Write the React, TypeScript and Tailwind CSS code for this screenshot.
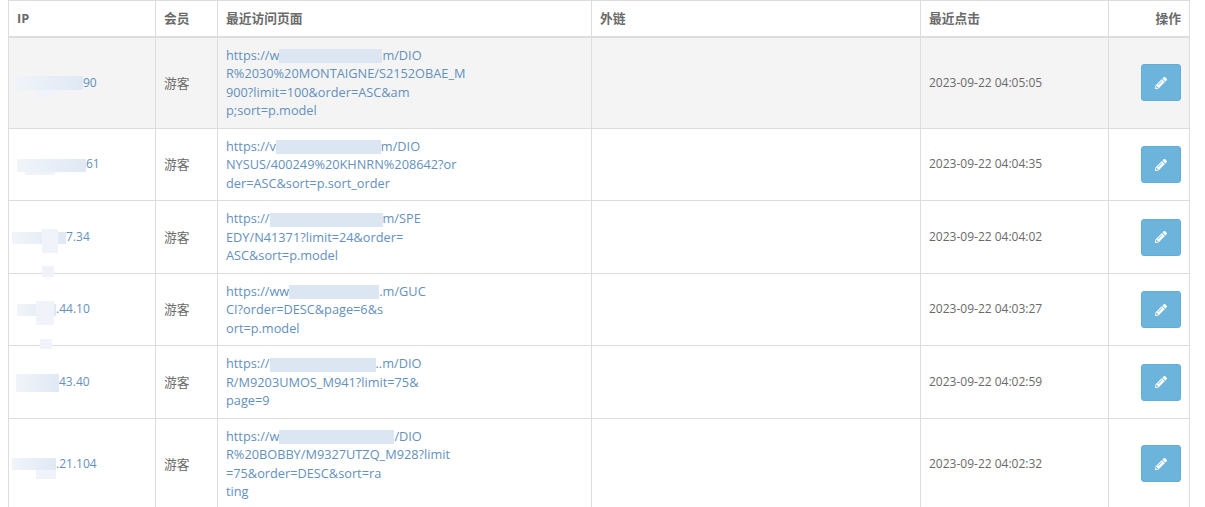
import { FaPencilAlt } from 'react-icons/fa'

interface Smudge {
  left: number
  top: number
  width: number
  height: number
}

interface Visit {
  ipPatch: number
  ipOffset: number
  ipPatchHeight: number
  smudges: Smudge[]
  ip: string
  urlHead: string
  urlPatch: number
  urlTail: string
  urlLines: string[]
  clicked: string
}

const visits: Visit[] = [
  { ipPatch: 70, ipOffset: -4, ipPatchHeight: 14, smudges: [{ left: 24, top: 14, width: 18, height: 7 }], ip: '90', urlHead: 'https://w', urlPatch: 103, urlTail: 'm/DIO', urlLines: ['R%2030%20MONTAIGNE/S2152OBAE_M', '900?limit=100&order=ASC&am', 'p;sort=p.model'], clicked: '2023-09-22 04:05:05' },
  { ipPatch: 69, ipOffset: 0, ipPatchHeight: 13, smudges: [{ left: 8, top: 13, width: 30, height: 3 }], ip: '61', urlHead: 'https://v', urlPatch: 105, urlTail: 'm/DIO', urlLines: ['NYSUS/400249%20KHNRN%208642?or', 'der=ASC&sort=p.sort_order'], clicked: '2023-09-22 04:04:35' },
  { ipPatch: 54, ipOffset: -5, ipPatchHeight: 12, smudges: [{ left: 30, top: -3, width: 16, height: 24 }, { left: 30, top: 34, width: 12, height: 11 }], ip: '7.34', urlHead: 'https://', urlPatch: 113, urlTail: 'm/SPE', urlLines: ['EDY/N41371?limit=24&order=', 'ASC&sort=p.model'], clicked: '2023-09-22 04:04:02' },
  { ipPatch: 39, ipOffset: 0, ipPatchHeight: 12, smudges: [{ left: 19, top: -3, width: 18, height: 24 }, { left: 23, top: 35, width: 12, height: 10 }], ip: '.44.10', urlHead: 'https://ww', urlPatch: 90, urlTail: '.m/GUC', urlLines: ['CI?order=DESC&page=6&s', 'ort=p.model'], clicked: '2023-09-22 04:03:27' },
  { ipPatch: 43, ipOffset: -1, ipPatchHeight: 18, smudges: [], ip: '43.40', urlHead: 'https://', urlPatch: 106, urlTail: '..m/DIO', urlLines: ['R/M9203UMOS_M941?limit=75&', 'page=9'], clicked: '2023-09-22 04:02:59' },
  { ipPatch: 44, ipOffset: -5, ipPatchHeight: 12, smudges: [{ left: 24, top: 12, width: 20, height: 9 }], ip: '.21.104', urlHead: 'https://w', urlPatch: 115, urlTail: '/DIO', urlLines: ['R%20BOBBY/M9327UTZQ_M928?limit', '=75&order=DESC&sort=ra', 'ting'], clicked: '2023-09-22 04:02:32' },
]

export default function App() {
  return (
    <div className="h-[507px] w-[1205px] overflow-hidden bg-white pl-2 text-[12px] leading-[18.5px] text-[#6a6a6a] font-['Open_Sans','Noto_Sans_CJK_SC',sans-serif]">
      <table className="w-[1181px] table-fixed border-collapse">
        <colgroup>
          <col className="w-[147px]" />
          <col className="w-[62px]" />
          <col className="w-[374px]" />
          <col className="w-[329px]" />
          <col className="w-[188px]" />
          <col className="w-[81px]" />
        </colgroup>
        <thead>
          <tr className="h-[36.4px] border-t border-[#ddd] text-left text-[12.75px] font-bold">
            <th className="border-x border-b-2 border-[#ddd] px-2">IP</th>
            <th className="border-x border-b-2 border-[#ddd] px-2">会员</th>
            <th className="border-x border-b-2 border-[#ddd] px-2">最近访问页面</th>
            <th className="border-x border-b-2 border-[#ddd] px-2">外链</th>
            <th className="border-x border-b-2 border-[#ddd] px-2">最近点击</th>
            <th className="border-x border-b-2 border-[#ddd] px-2 text-right">操作</th>
          </tr>
        </thead>
        <tbody>
          {visits.map((visit, i) => (
            <tr key={visit.clicked} className={i === 0 ? 'bg-[#f4f4f4]' : ''}>
              <td className="border border-[#ddd] px-2 align-middle text-[#6490bc]">
                {/* blurred out part of the address */}
                <span
                  className="relative inline-block bg-linear-to-r from-[#f1f5fa] to-[#dfe8f4] align-middle"
                  style={{ width: visit.ipPatch, height: visit.ipPatchHeight, marginLeft: visit.ipOffset }}
                >
                  {visit.smudges.map((s) => (
                    <span
                      key={s.top}
                      className="absolute bg-[#f0f4fa]"
                      style={{ left: s.left, top: s.top, width: s.width, height: s.height }}
                    />
                  ))}
                </span>
                {visit.ip}
              </td>
              <td className="border border-[#ddd] px-2 align-middle text-[12.75px]">游客</td>
              <td className="border border-[#ddd] px-2 py-2 align-top text-[12.75px] text-[#6490bc]">
                {visit.urlHead}
                <span
                  className="inline-block h-[14px] bg-[#dce6f2] align-middle"
                  style={{ width: visit.urlPatch }}
                />
                {visit.urlTail}
                {visit.urlLines.map((line) => (
                  <div key={line}>{line}</div>
                ))}
              </td>
              <td className="border border-[#ddd] px-2" />
              <td className="border border-[#ddd] px-2 align-middle">{visit.clicked}</td>
              <td className="border border-[#ddd] px-2 align-middle">
                <div className="flex justify-end">
                  <button className="flex h-[37px] w-[40px] items-center justify-center rounded-[3px] border border-[#62aed8] bg-[#6cb4dc] text-white">
                    <FaPencilAlt className="text-[12px]" />
                  </button>
                </div>
              </td>
            </tr>
          ))}
        </tbody>
      </table>
    </div>
  )
}
